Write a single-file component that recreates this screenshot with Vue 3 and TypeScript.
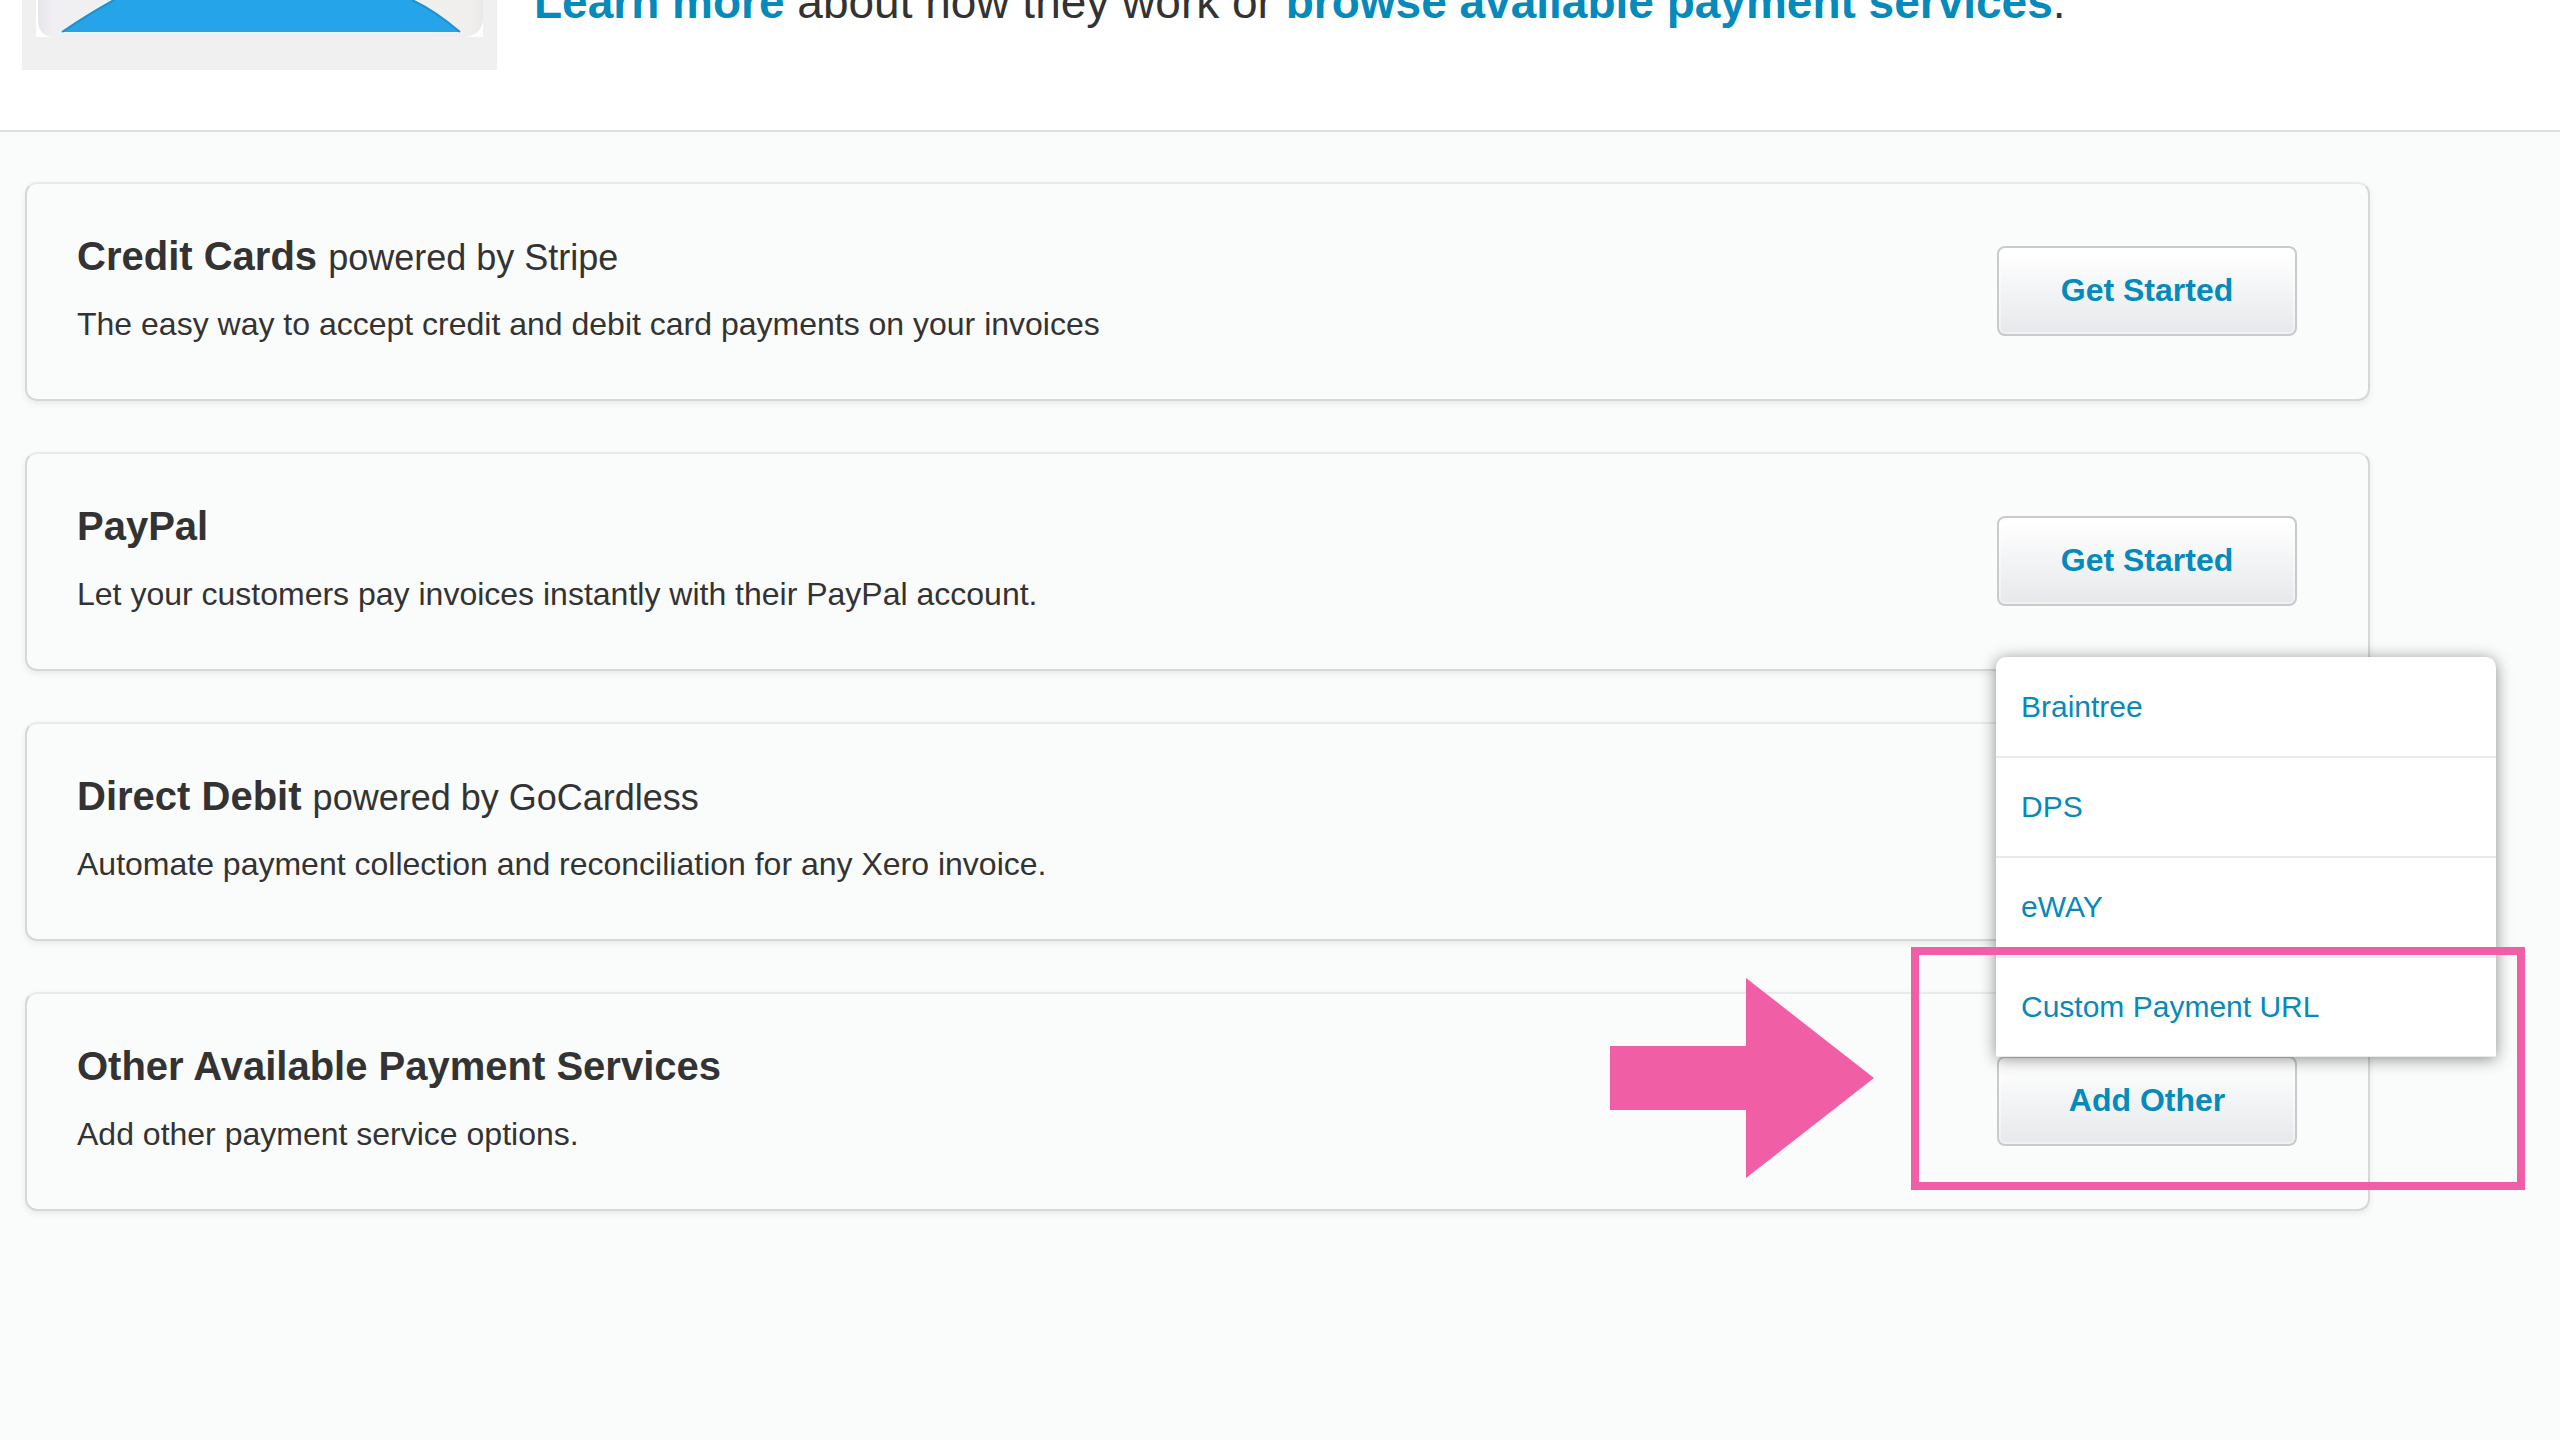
<script setup lang="ts">
interface Service {
  id: string
  title: string
  provider?: string
  description: string
  action?: string
  options?: string[]
}

const services: Service[] = [
  {
    id: 'stripe',
    title: 'Credit Cards',
    provider: 'powered by Stripe',
    description: 'The easy way to accept credit and debit card payments on your invoices',
    action: 'Get Started',
  },
  {
    id: 'paypal',
    title: 'PayPal',
    description: 'Let your customers pay invoices instantly with their PayPal account.',
    action: 'Get Started',
  },
  {
    id: 'gocardless',
    title: 'Direct Debit',
    provider: 'powered by GoCardless',
    description: 'Automate payment collection and reconciliation for any Xero invoice.',
  },
  {
    id: 'other',
    title: 'Other Available Payment Services',
    description: 'Add other payment service options.',
    action: 'Add Other',
    options: ['Braintree', 'DPS', 'eWAY', 'Custom Payment URL'],
  },
]
</script>

<template>
  <div class="page">
    <header class="intro">
      <svg class="thumb" viewBox="0 0 475 70" aria-hidden="true">
        <defs>
          <linearGradient id="paper" x1="0" x2="1" y1="0" y2="0">
            <stop offset="0" stop-color="#e4e6e8" />
            <stop offset="0.03" stop-color="#f0eff3" />
            <stop offset="0.97" stop-color="#f1efee" />
            <stop offset="1" stop-color="#e9e9e7" />
          </linearGradient>
        </defs>
        <rect width="475" height="70" fill="#f0f0f0" />
        <rect x="14" y="0" width="447" height="37" fill="#fff" />
        <path d="M16 0V22Q18 37 32 37H444Q459 35 461 20V0Z" fill="url(#paper)" />
        <path d="M84 0Q62 15 38 33H441Q417 13 394 0Z" fill="#e6f8ff" />
        <path d="M92 0Q68 13 40 32H438Q412 10 390 0Z" fill="#25a4ea" />
        <path d="M92 0Q68 13 40 32M438 32Q412 10 390 0" fill="none" stroke="#2390c8" stroke-width="2" />
      </svg>
      <p class="lead">
        <a href="#learn">Learn more</a> about how they work or
        <a href="#browse">browse available payment services</a>.
      </p>
    </header>

    <main class="services">
      <section v-for="s in services" :key="s.id" class="card">
        <div class="info">
          <h2 class="title">
            {{ s.title }} <span v-if="s.provider" class="provider">{{ s.provider }}</span>
          </h2>
          <p class="description">{{ s.description }}</p>
        </div>
        <div v-if="s.action" class="action">
          <button type="button" class="btn">{{ s.action }}</button>
          <template v-if="s.options">
            <ul class="menu">
              <li v-for="o in s.options" :key="o"><a href="#add">{{ o }}</a></li>
            </ul>
            <div class="highlight"></div>
            <svg class="arrow" viewBox="0 0 264 200" aria-hidden="true">
              <path d="M0 68H136V0L264 100L136 200V132H0Z" fill="#f05fa6" />
            </svg>
          </template>
        </div>
      </section>
    </main>
  </div>
</template>

<style>
body {
  margin: 0;
  background: #fafcfb;
}
</style>

<style scoped>
.page {
  font-family: "Liberation Sans", Arial, sans-serif;
  color: #333;
  overflow: hidden;
}
a {
  color: #048abb;
  text-decoration: none;
}
.intro {
  display: flex;
  align-items: flex-start;
  gap: 37px;
  padding: 0 22px 60px;
  background: #fff;
  border-bottom: 2px solid #dddfdf;
}
.thumb {
  flex: none;
  width: 475px;
  height: 70px;
}
.lead {
  margin: -28px 0 0;
  font-size: 46px;
  line-height: 60px;
}
.lead a {
  font-weight: bold;
}
.services {
  display: flex;
  flex-direction: column;
  gap: 51px;
  padding: 50px 190px 51px 25px;
}
.card {
  display: flex;
  justify-content: space-between;
  align-items: flex-start;
  padding: 0 71px 0 50px;
  border: 2px solid #d6d7d7;
  border-top-color: #e9eaea;
  border-radius: 12px;
  box-shadow: 0 3px 6px rgba(0, 0, 0, 0.07);
}
.info {
  padding: 48px 0 55px;
}
.title {
  margin: 0 0 24px;
  font-size: 40px;
  line-height: 48px;
}
.provider {
  font-size: 36px;
  font-weight: normal;
  line-height: 36px;
}
.description {
  margin: 0;
  font-size: 32px;
  line-height: 40px;
}
.action {
  position: relative;
  margin-top: 62px;
}
.btn {
  display: block;
  box-sizing: border-box;
  width: 300px;
  height: 90px;
  padding: 0 0 2px;
  border: 2px solid #c9cacb;
  border-radius: 8px;
  background: linear-gradient(#fff 5%, #e6e8eb);
  box-shadow: inset 0 0 0 2px rgba(255, 255, 255, 0.4);
  color: #048abb;
  font: bold 32px "Liberation Sans", Arial, sans-serif;
}
.menu {
  position: absolute;
  z-index: 1;
  bottom: calc(100% - 1px);
  left: -1px;
  width: 500px;
  margin: 0;
  padding: 1px 0 0;
  list-style: none;
  background: #fff;
  border-radius: 10px 10px 0 0;
  box-shadow: 0 2px 16px rgba(0, 0, 0, 0.45);
}
.menu li {
  border-bottom: 2px solid #e8ecef;
}
.menu li:last-child {
  border-bottom-width: 1px;
}
.menu a {
  display: block;
  padding: 0 25px;
  font-size: 30px;
  line-height: 98px;
}
.highlight {
  position: absolute;
  z-index: 2;
  top: -109px;
  left: -86px;
  box-sizing: border-box;
  width: 614px;
  height: 243px;
  border: 8px solid #f05fa6;
  pointer-events: none;
}
.arrow {
  position: absolute;
  top: -78px;
  left: -387px;
  width: 264px;
  height: 200px;
}
</style>
